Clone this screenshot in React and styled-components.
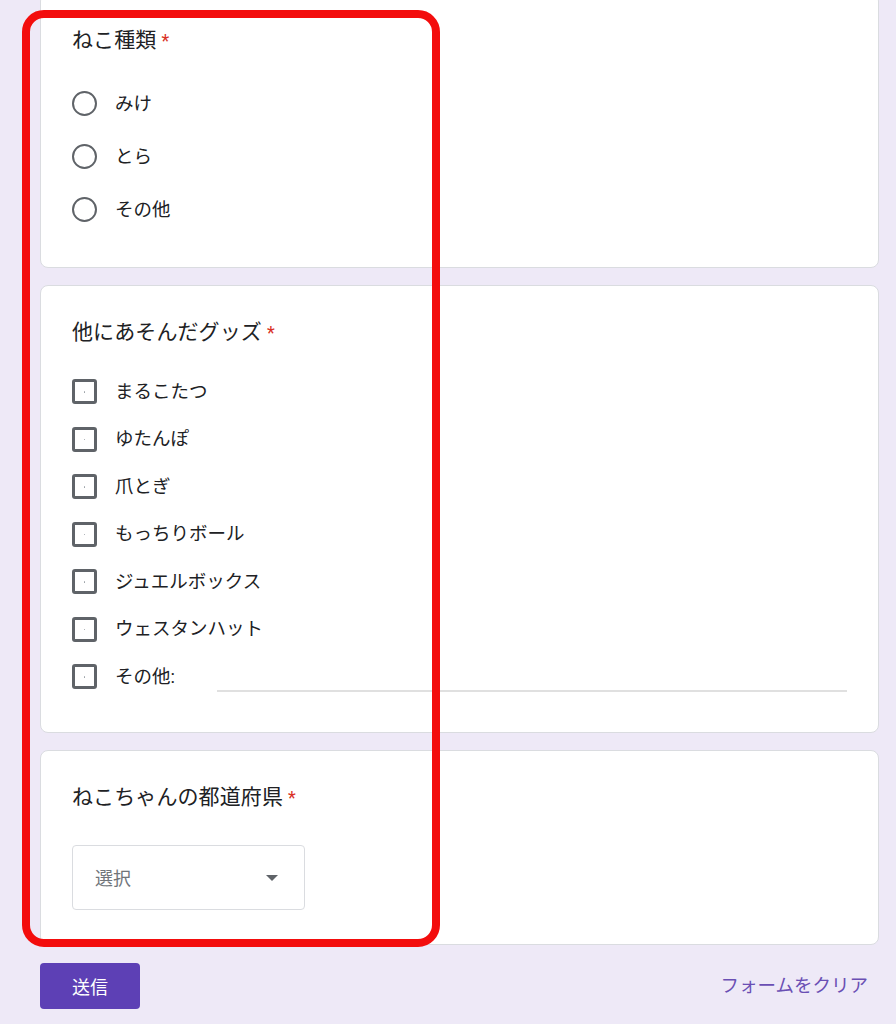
import React from "react";
import styled, { createGlobalStyle } from "styled-components";

const Global = createGlobalStyle`
  html, body { margin: 0; padding: 0; background: #eee9f7; }
  body {
    font-family: Roboto, "Noto Sans CJK JP", "Noto Sans", sans-serif;
    color: #202124;
    overflow: hidden;
  }
  * { box-sizing: border-box; }
`;

const Page = styled.div`
  position: relative;
  width: 896px;
  height: 1024px;
  padding: 0 17px 0 40px;
  overflow: hidden;
`;

const Stack = styled.div`
  display: flex;
  flex-direction: column;
  gap: 17px;
  margin-top: -7px;
`;

const Card = styled.section`
  background: #fff;
  border: 1px solid #dadce0;
  border-radius: 8px;
  padding: 23px 31px 31px;
`;

const Title = styled.div`
  font-size: 21px;
  line-height: 46px;
  height: 46px;
  color: #202124;
  letter-spacing: 0.1px;
`;

const Req = styled.span`
  color: #d93025;
  margin-left: 5px;
  font-size: 18px;
`;

const Options = styled.div`
  display: flex;
  flex-direction: column;
  margin-top: ${(p) => p.$top}px;
`;

const Row = styled.label`
  display: flex;
  align-items: center;
  height: ${(p) => p.$h}px;
`;

const Radio = styled.span`
  width: 25px;
  height: 25px;
  border-radius: 50%;
  border: 2.6px solid #5f6368;
  flex: none;
`;

const Check = styled.span`
  position: relative;
  width: 25px;
  height: 25px;
  border-radius: 3px;
  border: 3px solid #5f6368;
  flex: none;
  &::after {
    content: "";
    position: absolute;
    left: 50%;
    top: 50%;
    width: 1.5px;
    height: 1.5px;
    margin: -0.75px 0 0 -0.75px;
    background: #9aa0a6;
    border-radius: 50%;
  }
`;

const Label = styled.span`
  margin-left: 18px;
  font-size: 18.5px;
  line-height: 24px;
  color: #202124;
  white-space: nowrap;
`;

const OtherLine = styled.span`
  flex: 1;
  align-self: flex-end;
  margin: 0 0 9px 42px;
  height: 2px;
  background: #e0e0e0;
`;

const Select = styled.div`
  width: 233px;
  height: 65px;
  margin: 25px 0 3px;
  border: 1px solid #dadce0;
  border-radius: 4px;
  display: flex;
  align-items: center;
  padding: 0 26px 0 22px;
  justify-content: space-between;
`;

const SelectText = styled.span`
  font-size: 18px;
  color: #70757a;
`;

const Caret = styled.span`
  width: 0;
  height: 0;
  border-left: 6px solid transparent;
  border-right: 6px solid transparent;
  border-top: 6px solid #5f6368;
  margin-top: 2px;
`;

const Footer = styled.div`
  display: flex;
  align-items: center;
  justify-content: space-between;
  margin-top: 18px;
  padding-right: 11px;
`;

const Submit = styled.button`
  width: 100px;
  height: 46px;
  border: none;
  border-radius: 4px;
  background: #5d40b5;
  color: #fff;
  font-family: inherit;
  font-size: 18px;
  padding: 0;
`;

const Clear = styled.span`
  color: #6a4fb4;
  font-size: 18.5px;
  margin-top: -3px;
`;

const Annotation = styled.div`
  position: absolute;
  left: 22px;
  top: 10px;
  width: 418px;
  height: 937px;
  border: 8px solid #f30d0d;
  border-radius: 22px;
  pointer-events: none;
`;

const cats = ["みけ", "とら", "その他"];
const goods = [
  "まるこたつ",
  "ゆたんぽ",
  "爪とぎ",
  "もっちりボール",
  "ジュエルボックス",
  "ウェスタンハット",
];

export default function App() {
  return (
    <>
      <Global />
      <Page>
        <Stack>
          <Card>
            <Title>
              ねこ種類<Req>*</Req>
            </Title>
            <Options $top={14}>
              {cats.map((c) => (
                <Row key={c} $h={53}>
                  <Radio />
                  <Label>{c}</Label>
                </Row>
              ))}
            </Options>
          </Card>
          <Card>
            <Title>
              他にあそんだグッズ<Req>*</Req>
            </Title>
            <Options $top={13}>
              {goods.map((g) => (
                <Row key={g} $h={47.5}>
                  <Check />
                  <Label>{g}</Label>
                </Row>
              ))}
              <Row $h={47.5}>
                <Check />
                <Label>その他:</Label>
                <OtherLine />
              </Row>
            </Options>
          </Card>
          <Card>
            <Title>
              ねこちゃんの都道府県<Req>*</Req>
            </Title>
            <Select>
              <SelectText>選択</SelectText>
              <Caret />
            </Select>
          </Card>
        </Stack>
        <Footer>
          <Submit>送信</Submit>
          <Clear>フォームをクリア</Clear>
        </Footer>
        <Annotation />
      </Page>
    </>
  );
}
